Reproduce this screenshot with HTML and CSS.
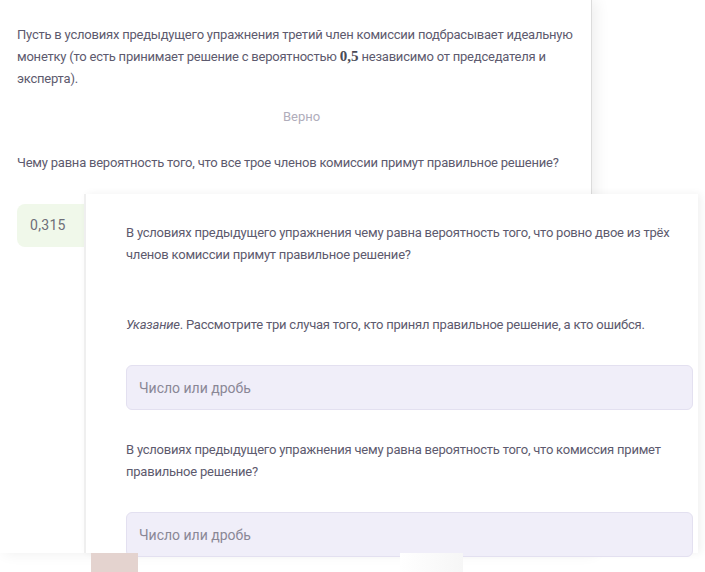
FILE: index.html
```html
<!DOCTYPE html>
<html lang="ru">
<head>
    <meta charset="UTF-8">
    <title>Упражнения</title>
    <link rel="stylesheet" href="styles.css">
</head>
<body>
    <div class="page">
        <div class="sheet back">
            <p class="task">Пусть в условиях предыдущего упражнения третий член комиссии подбрасывает идеальную монетку (то есть принимает решение с вероятностью <b class="math">0,5</b> независимо от председателя и эксперта).</p>
            <div class="verdict">Верно</div>
            <p class="task q">Чему равна вероятность того, что все трое членов комиссии примут правильное решение?</p>
            <div class="answer">0,315</div>
        </div>

        <div class="sheet front">
            <p class="task">В условиях предыдущего упражнения чему равна вероятность того, что ровно двое из трёх членов комиссии примут правильное решение?</p>
            <p class="task hint"><i>Указание</i>. Рассмотрите три случая того, кто принял правильное решение, а кто ошибся.</p>
            <input class="field" type="text" placeholder="Число или дробь">
            <p class="task next">В условиях предыдущего упражнения чему равна вероятность того, что комиссия примет правильное решение?</p>
            <input class="field" type="text" placeholder="Число или дробь">
        </div>

        <div class="tab"></div>
        <div class="fade"></div>
    </div>
</body>
</html>
```

FILE: styles.css
```css
body {
    margin: 0;
    padding: 0;
    background: #fff;
    font-family: Roboto, "Open Sans", sans-serif;
    color: #5d5a6e;
    overflow: hidden;
}
.page {
    position: relative;
    width: 705px;
    height: 572px;
    overflow: hidden;
}
.sheet {
    background: #fff;
    box-sizing: border-box;
}
.back {
    width: 592px;
    height: 553px;
    padding: 24px 0 0 17px;
    border-right: 1px solid #dcdcdc;
    box-shadow: 4px 0 14px rgba(0, 0, 0, 0.07);
}
.task {
    margin: 0;
    font-size: 13px;
    letter-spacing: -0.22px;
    line-height: 22px;
    padding-right: 8px;
}
.math {
    font-family: "Liberation Serif", serif;
    font-size: 15px;
    line-height: 1;
    letter-spacing: 0;
    color: #4a4a56;
}
.verdict {
    text-align: center;
    font-size: 13px;
    color: #b0adbb;
    margin: 16px 0 0 0;
    padding-right: 5px;
    line-height: 22px;
}
.q {
    margin-top: 24px;
}
.answer {
    margin-top: 30px;
    width: 90px;
    height: 43px;
    line-height: 43px;
    padding-left: 13px;
    box-sizing: border-box;
    background: #f0f8ea;
    border-radius: 8px;
    font-size: 14px;
    letter-spacing: 0.3px;
    color: #6e6e78;
}
.front {
    position: absolute;
    left: 84px;
    top: 194px;
    width: 614px;
    height: 359px;
    padding: 28px 5px 0 40px;
    border-left: 2px solid #efefef;
    box-shadow: 3px 0 8px rgba(0, 0, 0, 0.06);
}
.hint {
    margin-top: 48px;
}
.hint i {
    font-style: italic;
}
.field {
    display: block;
    box-sizing: border-box;
    width: 567px;
    height: 45px;
    margin-top: 29px;
    padding: 0 12px;
    background: #f0eef9;
    border: 1px solid #e3e0f0;
    border-radius: 6px;
    font-family: Roboto, "Open Sans", sans-serif;
    font-size: 14px;
    color: #5d5a6e;
    outline: none;
}
.field::placeholder {
    color: #8a8796;
}
.next {
    margin-top: 29px;
}
.tab {
    position: absolute;
    left: 91px;
    top: 553px;
    width: 47px;
    height: 19px;
    background: #e4d3cf;
}
.fade {
    position: absolute;
    left: 400px;
    top: 553px;
    width: 63px;
    height: 19px;
    background: linear-gradient(to right, #fff, #f6f6f6);
}
```
